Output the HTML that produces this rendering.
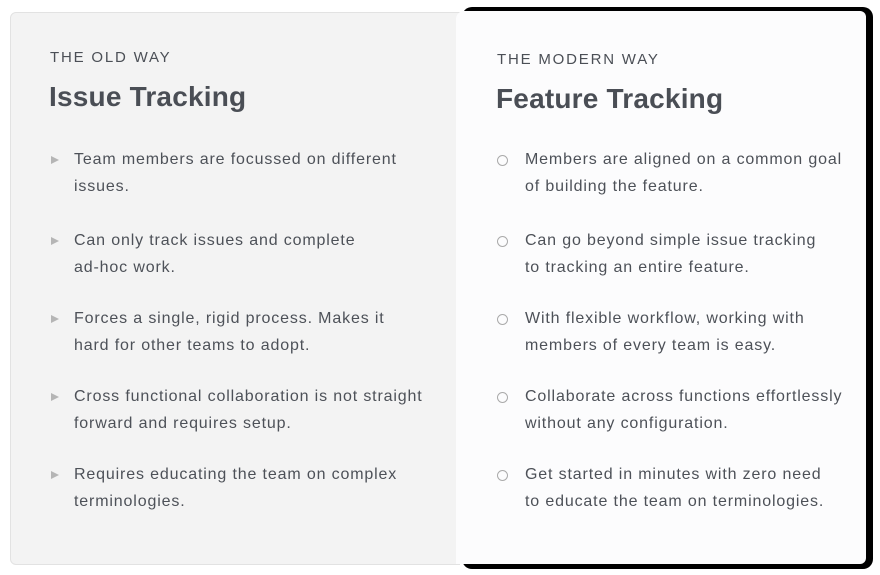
<!DOCTYPE html>
<html><head><style>
body{margin:0;width:880px;height:575px;background:#fff;position:relative;font-family:"Liberation Sans",Arial,sans-serif;overflow:hidden}
.left{position:absolute;left:10px;top:12px;width:450px;height:553px;background:#f3f3f3;border:1px solid #e2e2e2;border-radius:6px 0 0 6px;box-sizing:border-box}
.shadow{position:absolute;left:462px;top:7px;width:411px;height:562px;background:#000;border-radius:10px}
.right{position:absolute;left:456px;top:11px;width:410px;height:553px;background:#fcfcfd;border-radius:8px 6px 6px 0}
.lab{position:absolute;font-size:15px;letter-spacing:1.8px;color:#4b4f56}
.ttl{position:absolute;font-size:28px;font-weight:bold;color:#4a4e55;letter-spacing:0.2px}
.it{position:absolute;font-size:16px;line-height:27px;color:#4d5158;letter-spacing:0.85px;white-space:nowrap}
.tri{position:absolute;width:0;height:0;border-left:8px solid #b5b5b5;border-top:4.5px solid transparent;border-bottom:4.5px solid transparent}
.circ{position:absolute;width:9px;height:9px;border:1.5px solid #aaa;border-radius:50%}
</style></head><body>
<div class="left"></div>
<div class="shadow"></div>
<div class="right"></div>
<div class="lab" style="left:50px;top:49px">THE OLD WAY</div>
<div class="ttl" style="left:49px;top:81px">Issue Tracking</div>
<div class="lab" style="left:497px;top:51px">THE MODERN WAY</div>
<div class="ttl" style="left:496px;top:83px">Feature Tracking</div>

<div class="tri" style="left:51px;top:156px"></div><div class="it" style="left:74px;top:146px">Team members are focussed on different<br>issues.</div>
<div class="tri" style="left:51px;top:237px"></div><div class="it" style="left:74px;top:227px">Can only track issues and complete<br>ad-hoc work.</div>
<div class="tri" style="left:51px;top:315px"></div><div class="it" style="left:74px;top:305px">Forces a single, rigid process. Makes it<br>hard for other teams to adopt.</div>
<div class="tri" style="left:51px;top:393px"></div><div class="it" style="left:74px;top:383px">Cross functional collaboration is not straight<br>forward and requires setup.</div>
<div class="tri" style="left:51px;top:471px"></div><div class="it" style="left:74px;top:461px">Requires educating the team on complex<br>terminologies.</div>

<div class="circ" style="left:497px;top:155px"></div><div class="it" style="left:525px;top:146px">Members are aligned on a common goal<br>of building the feature.</div>
<div class="circ" style="left:497px;top:236px"></div><div class="it" style="left:525px;top:227px">Can go beyond simple issue tracking<br>to tracking an entire feature.</div>
<div class="circ" style="left:497px;top:314px"></div><div class="it" style="left:525px;top:305px">With flexible workflow, working with<br>members of every team is easy.</div>
<div class="circ" style="left:497px;top:392px"></div><div class="it" style="left:525px;top:383px">Collaborate across functions effortlessly<br>without any configuration.</div>
<div class="circ" style="left:497px;top:470px"></div><div class="it" style="left:525px;top:461px">Get started in minutes with zero need<br>to educate the team on terminologies.</div>
</body></html>
